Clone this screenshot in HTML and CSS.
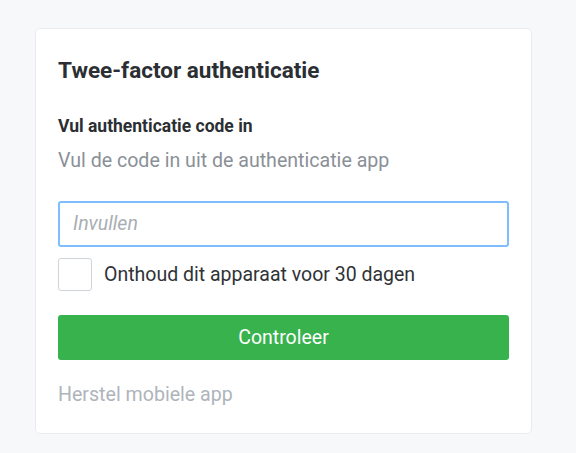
FILE: index.html
```html
<!DOCTYPE html>
<html lang="nl">
<head>
<meta charset="utf-8">
<title>Twee-factor authenticatie</title>
<link rel="stylesheet" href="styles.css">
</head>
<body>
<div class="page">
  <div class="card">
    <h1 class="title">Twee-factor authenticatie</h1>
    <h2 class="subtitle">Vul authenticatie code in</h2>
    <p class="hint">Vul de code in uit de authenticatie app</p>
    <input class="code-input" type="text" placeholder="Invullen">
    <label class="remember">
      <span class="checkbox"></span>
      <span class="remember-text">Onthoud dit apparaat voor 30 dagen</span>
    </label>
    <button class="submit" type="button">Controleer</button>
    <a class="recover" href="#">Herstel mobiele app</a>
  </div>
</div>
</body>
</html>
```

FILE: styles.css
```css
html, body {
  margin: 0;
  padding: 0;
  background: #f7f8fa;
  font-family: Roboto, "Liberation Sans", Arial, sans-serif;
}
.page {
  padding: 28px 0 0 35px;
  width: 497px;
}
.card {
  box-sizing: border-box;
  width: 497px;
  height: 406px;
  background: #ffffff;
  border: 1px solid #e9ecef;
  border-radius: 5px;
  padding: 27.5px 22px 0 22px;
  display: flex;
  flex-direction: column;
  align-items: flex-start;
}
.title {
  margin: 0;
  font-size: 22.5px;
  font-weight: 700;
  color: #2b2f33;
  line-height: 26px;
}
.subtitle {
  margin: 32.5px 0 0 0;
  font-size: 17.5px;
  font-weight: 700;
  color: #2b2f33;
  line-height: 22px;
}
.hint {
  margin: 12.3px 0 0 0;
  font-size: 19.6px;
  color: #8a9097;
  line-height: 24px;
}
.code-input {
  box-sizing: border-box;
  margin-top: 27.7px;
  width: 451px;
  height: 46px;
  border: 2px solid #80bdff;
  border-radius: 3px;
  padding: 0 13px;
  font-family: inherit;
  font-size: 19.5px;
  color: #333;
  outline: none;
}
.code-input::placeholder {
  color: #a9aeb4;
  font-style: italic;
}
.remember {
  margin-top: 11px;
  display: flex;
  align-items: center;
  gap: 12px;
}
.checkbox {
  box-sizing: border-box;
  width: 34px;
  height: 33px;
  border: 1px solid #ced4da;
  border-radius: 3px;
  background: #fff;
}
.remember-text {
  font-size: 19.5px;
  color: #2f3337;
}
.submit {
  margin-top: 24px;
  width: 451px;
  height: 45px;
  border: none;
  border-radius: 3px;
  background: #37b24d;
  color: #ffffff;
  font-family: inherit;
  font-size: 19.5px;
  padding: 0;
}
.recover {
  margin-top: 23.5px;
  font-size: 19.6px;
  line-height: 24px;
  color: #aeb4bc;
  text-decoration: none;
}
```
